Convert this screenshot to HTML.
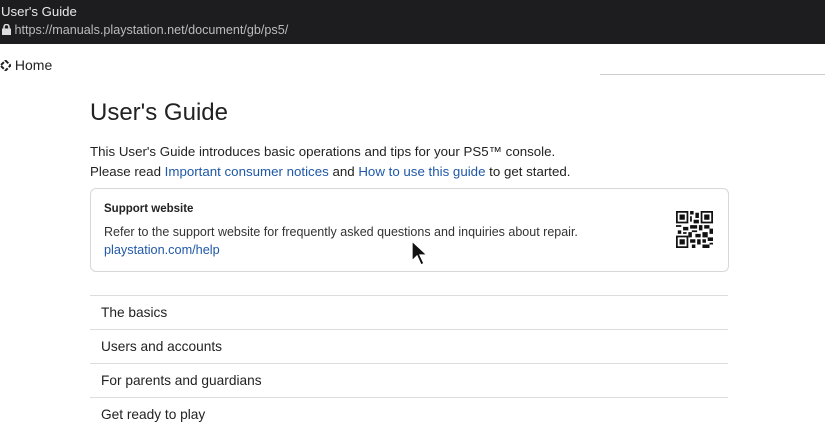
<!DOCTYPE html>
<html><head><style>
body{margin:0;width:825px;height:413px;overflow:hidden;background:#fff;font-family:"Liberation Sans",sans-serif;position:relative}
.hdr{position:absolute;left:0;top:0;width:825px;height:44px;background:#1d1d1f}
.t{position:absolute;white-space:nowrap}
a{color:#1f58a8;text-decoration:none}
.row{position:absolute;left:90px;width:638px;border-top:1px solid #ddd;height:34px}
.row span{position:absolute;left:11px;top:9px;font-size:13.7px;color:#222}
</style></head><body>
<div class="hdr"></div>
<div class="t" style="left:1px;top:4px;font-size:13.2px;color:#e8e8e8">User's Guide</div>
<div class="t" style="left:2px;top:23px;font-size:12.6px;color:#bbb"><svg width="9" height="11" viewBox="0 0 9 11" style="vertical-align:-1px"><rect x="0" y="4.5" width="9" height="6.5" fill="#ddd"/><path d="M2 5V3a2.5 2.5 0 0 1 5 0v2" stroke="#ddd" stroke-width="1.6" fill="none"/></svg> https://manuals.playstation.net/document/gb/ps5/</div>
<div class="t" style="left:0;top:57px;font-size:14px;color:#222"><svg width="11" height="11" viewBox="0 0 11 11" style="vertical-align:-1px"><path d="M5.5 0.5L10.5 5.5L5.5 10.5L0.5 5.5Z" stroke="#222" stroke-width="2" fill="none" stroke-dasharray="4 1.5"/></svg> Home</div>
<div style="position:absolute;left:600px;top:74px;width:225px;height:1px;background:#ccc"></div>
<div class="t" style="left:90px;top:99px;font-size:24px;color:#222">User's Guide</div>
<div class="t" style="left:90px;top:142px;font-size:13.3px;color:#222;line-height:20px">This User's Guide introduces basic operations and tips for your PS5™ console.<br>Please read <a>Important consumer notices</a> and <a>How to use this guide</a> to get started.</div>
<div style="position:absolute;left:90px;top:188px;width:637px;height:82px;border:1px solid #d8d8d8;border-radius:6px"></div>
<div class="t" style="left:104px;top:203px;font-size:11.5px;font-weight:bold;color:#222">Support website</div>
<div class="t" style="left:104px;top:225px;font-size:12.5px;color:#333">Refer to the support website for frequently asked questions and inquiries about repair.</div>
<div class="t" style="left:104px;top:243px;font-size:12.7px;color:#1f58a8">playstation.com/help</div>
<svg style="position:absolute;left:676px;top:211px" width="37" height="37" viewBox="0 0 21 21">
<rect width="21" height="21" fill="#fff"/>
<g fill="#111">
<path d="M0 0h7v7h-7zM1 1v5h5v-5zM2 2h3v3h-3z" fill-rule="evenodd"/>
<path d="M14 0h7v7h-7zM15 1v5h5v-5zM16 2h3v3h-3z" fill-rule="evenodd"/>
<path d="M0 14h7v7h-7zM1 15v5h5v-5zM2 16h3v3h-3z" fill-rule="evenodd"/>
<path d="M8 0h2v2h-2zM11 1h2v3h-2zM8 3h1v3h-1zM10 5h3v2h-3zM0 8h3v1h-3zM4 9h3v2h-3zM8 8h4v2h-4zM13 8h2v3h-2zM16 8h3v2h-3zM19 10h2v3h-2zM1 11h2v2h-2zM9 11h3v1h-3zM7 12h2v3h-2zM11 13h3v2h-3zM15 12h3v3h-3zM4 12h2v1h-2zM8 16h3v2h-3zM12 16h2v3h-2zM15 16h2v2h-2zM18 15h3v2h-3zM9 19h2v2h-2zM15 19h4v2h-4zM19 18h2v1h-2z"/>
</g></svg>
<svg style="position:absolute;left:411px;top:240px" width="18" height="28" viewBox="0 0 18 28"><path d="M1 1L1 21L6 16L10 25L13 23.5L9 15L16 15Z" fill="#111" stroke="#fff" stroke-width="1.3"/></svg>
<div class="row" style="top:295px"><span>The basics</span></div>
<div class="row" style="top:329px"><span>Users and accounts</span></div>
<div class="row" style="top:363px"><span>For parents and guardians</span></div>
<div class="row" style="top:397px"><span>Get ready to play</span></div>
</body></html>
